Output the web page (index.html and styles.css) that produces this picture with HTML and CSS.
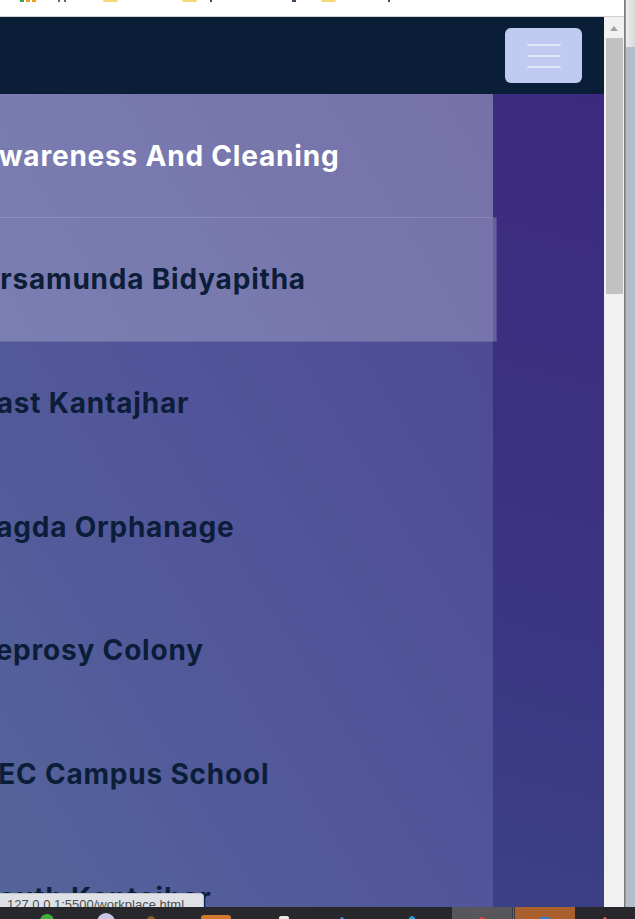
FILE: index.html
```html
<!DOCTYPE html>
<html lang="en">
<head>
<meta charset="utf-8">
<title>Workplace</title>
<link rel="stylesheet" href="styles.css">
</head>
<body>
<div class="screen">
  <div class="main-row">
    <div class="browser">
      <div class="bookmarks">
        <span class="bm-apps"><i class="sq g"></i><i class="sq o"></i><i class="sq o"></i></span>
        <span class="bm-mark m1"></span>
        <span class="bm-folder f1"></span>
        <span class="bm-mark m2"></span>
        <span class="bm-folder f2"></span>
        <span class="bm-mark m3"></span>
        <span class="bm-folder f3"></span>
        <span class="bm-mark m4"></span>
      </div>
      <div class="viewport">
        <div class="page">
          <header class="nav">
            <button class="toggler" type="button" aria-label="Toggle navigation">
              <span class="bar"></span><span class="bar"></span><span class="bar"></span>
            </button>
          </header>
          <main class="content">
            <ul class="panel">
              <li class="item active">Awareness And Cleaning</li>
              <li class="item hover">Ursamunda Bidyapitha</li>
              <li class="item">East Kantajhar</li>
              <li class="item">Jagda Orphanage</li>
              <li class="item">Leprosy Colony</li>
              <li class="item">REC Campus School</li>
              <li class="item">South Kantajhar</li>
            </ul>
          </main>
          <div class="status">127.0.0.1:5500/workplace.html</div>
        </div>
        <div class="scrollbar">
          <div class="arrow"></div>
          <div class="thumb"></div>
        </div>
      </div>
    </div>
    <div class="edge"></div>
    <div class="desk"><div class="desk-top"></div></div>
  </div>
  <div class="taskbar">
    <i class="tb-icon green"></i>
    <i class="tb-icon lilac"></i>
    <i class="tb-icon brown"></i>
    <i class="tb-icon orange"></i>
    <i class="tb-icon white"></i>
    <i class="tb-icon blue1"></i>
    <i class="tb-icon blue2"></i>
    <span class="tb-active"><i class="tb-icon red"></i></span>
    <span class="tb-divider"></span>
    <span class="tb-orange"><i class="tb-icon blue3"></i></span>
    <i class="tb-icon pink"></i>
  </div>
</div>
</body>
</html>
```
FILE: styles.css
```css
* { box-sizing: border-box; }
html, body { margin: 0; padding: 0; }
body {
  width: 635px;
  height: 919px;
  overflow: hidden;
  font-family: Inter, "Liberation Sans", sans-serif;
  background: #28272c;
}
.screen { display: flex; flex-direction: column; width: 635px; height: 919px; }
.main-row { display: flex; height: 907px; }
.browser { display: flex; flex-direction: column; width: 624px; }
.edge { width: 2px; background: linear-gradient(to right, #6e6e6e, #a7a7a7); }
.desk { width: 9px; background: #b2bdcb; }
.desk-top { height: 47px; background: linear-gradient(to right, #ececec, #d9d9d9); }

/* bookmarks strip */
.bookmarks {
  height: 17px;
  background: #fff;
  border-bottom: 1px solid #d0d0d0;
  display: flex;
  align-items: flex-start;
}
.bm-apps { display: flex; gap: 2px; margin-left: 20px; }
.sq { display: block; width: 4px; height: 2px; }
.sq.g { background: #3ea659; }
.sq.o { background: #f39a1e; }
.bm-mark { display: block; width: 2px; height: 2px; background: #3a4a6a; }
.m1 { margin-left: 22px; width: 8px; background: linear-gradient(to right, #5a6a8a 0 2px, transparent 2px 6px, #5a6a8a 6px); }
.bm-folder { display: block; width: 15px; height: 2px; background: #f7d774; border-radius: 0 0 2px 2px; }
.f1 { margin-left: 37px; }
.m2 { margin-left: 92px; }
.f2 { margin-left: -30px; }
.m3 { margin-left: 95px; width: 4px; }
.f3 { margin-left: 25px; }
.m4 { margin-left: 52px; }

.viewport { display: flex; flex: 1; min-height: 0; }
.page {
  position: relative;
  width: 604px;
  display: flex;
  flex-direction: column;
  overflow: hidden;
}

/* navbar */
.nav {
  height: 77px;
  flex: none;
  background: #0b1e38;
  display: flex;
  justify-content: flex-end;
  align-items: center;
  padding-right: 22px;
}
.toggler {
  width: 77px;
  height: 55px;
  border: 0;
  border-radius: 6px;
  background: #bfcbf1;
  display: flex;
  flex-direction: column;
  align-items: center;
  justify-content: center;
  gap: 9px;
  padding: 0;
}
.bar { display: block; width: 34px; height: 2px; border-radius: 1px; background: #e0e5f7; }

/* content */
.content {
  flex: 1;
  background: linear-gradient(195deg, #3c2a80 0%, #3c3381 45%, #3b4788 100%);
}
.panel {
  list-style: none;
  margin: 0 0 0 -43px;
  padding: 0;
  width: 536px;
  height: 100%;
  background: linear-gradient(to bottom left, #4d4790 0%, #52579a 55%, #54679a 100%);
}
.item {
  height: 123.67px;
  display: flex;
  align-items: center;
  padding-left: 22px;
  font-size: 28px;
  font-weight: 700;
  letter-spacing: 0.8px;
  color: #0b1d38;
  white-space: nowrap;
}
.item.active { background: rgba(255, 255, 255, 0.23); color: #fff; }
.item.hover {
  position: relative;
  margin-right: -3px;
  background: rgba(255, 255, 255, 0.23);
  box-shadow: 0 0 0 1px rgba(255, 255, 255, 0.14);
}

/* status tooltip (overlay) */
.status {
  position: absolute;
  left: 0;
  bottom: -8px;
  width: 204px;
  height: 22px;
  padding: 3px 0 0 7px;
  background: #dee1e6;
  border: 1px solid #c3c6cc;
  border-left: 0;
  border-bottom: 0;
  border-top-right-radius: 4px;
  font-family: "Liberation Sans", Arial, sans-serif;
  font-size: 13px;
  color: #505050;
  white-space: nowrap;
  overflow: hidden;
}

/* scrollbar */
.scrollbar { width: 20px; background: #f1f1f1; padding-top: 9px; }
.arrow {
  width: 0; height: 0;
  margin-left: 6px;
  border-left: 4.5px solid transparent;
  border-right: 4.5px solid transparent;
  border-bottom: 5px solid #a3a3a3;
}
.thumb { width: 17px; height: 256px; margin: 7px 0 0 2px; background: #c1c1c1; }

/* taskbar */
.taskbar {
  height: 12px;
  background: #28272c;
  display: flex;
  align-items: flex-start;
  overflow: hidden;
}
.tb-icon { display: block; width: 14px; height: 14px; border-radius: 50%; margin-top: 7px; }
.green { background: #3fae3a; margin-left: 40px; }
.lilac { background: #c9c4e6; margin-left: 43px; width: 18px; height: 18px; margin-top: 6px; }
.brown { background: #8a5a22; margin-left: 31px; width: 10px; margin-top: 9px; }
.orange { background: #d2782c; margin-left: 45px; width: 30px; border-radius: 3px; margin-top: 8px; }
.white { background: #e8e8e8; margin-left: 48px; width: 10px; border-radius: 2px; margin-top: 9px; }
.blue1 { background: #2d8ad8; margin-left: 50px; width: 6px; margin-top: 10px; }
.blue2 { background: #1fa1e0; margin-left: 63px; width: 8px; margin-top: 9px; }
.tb-active { display: flex; justify-content: center; width: 60px; height: 12px; margin-left: 36px; background: #57565b; }
.red { background: #d5443a; width: 10px; margin-top: 10px; }
.tb-divider { width: 3px; height: 12px; background: linear-gradient(to right, #3a393e 0 1px, #6a696e 1px 2px, #3a393e 2px); }
.tb-orange { display: flex; justify-content: center; width: 60px; height: 12px; background: #a9602c; }
.blue3 { background: #2f7fd6; width: 10px; margin-top: 10px; border-radius: 2px; }
.pink { background: #e2555f; margin-left: 27px; width: 6px; margin-top: 10px; }
```
